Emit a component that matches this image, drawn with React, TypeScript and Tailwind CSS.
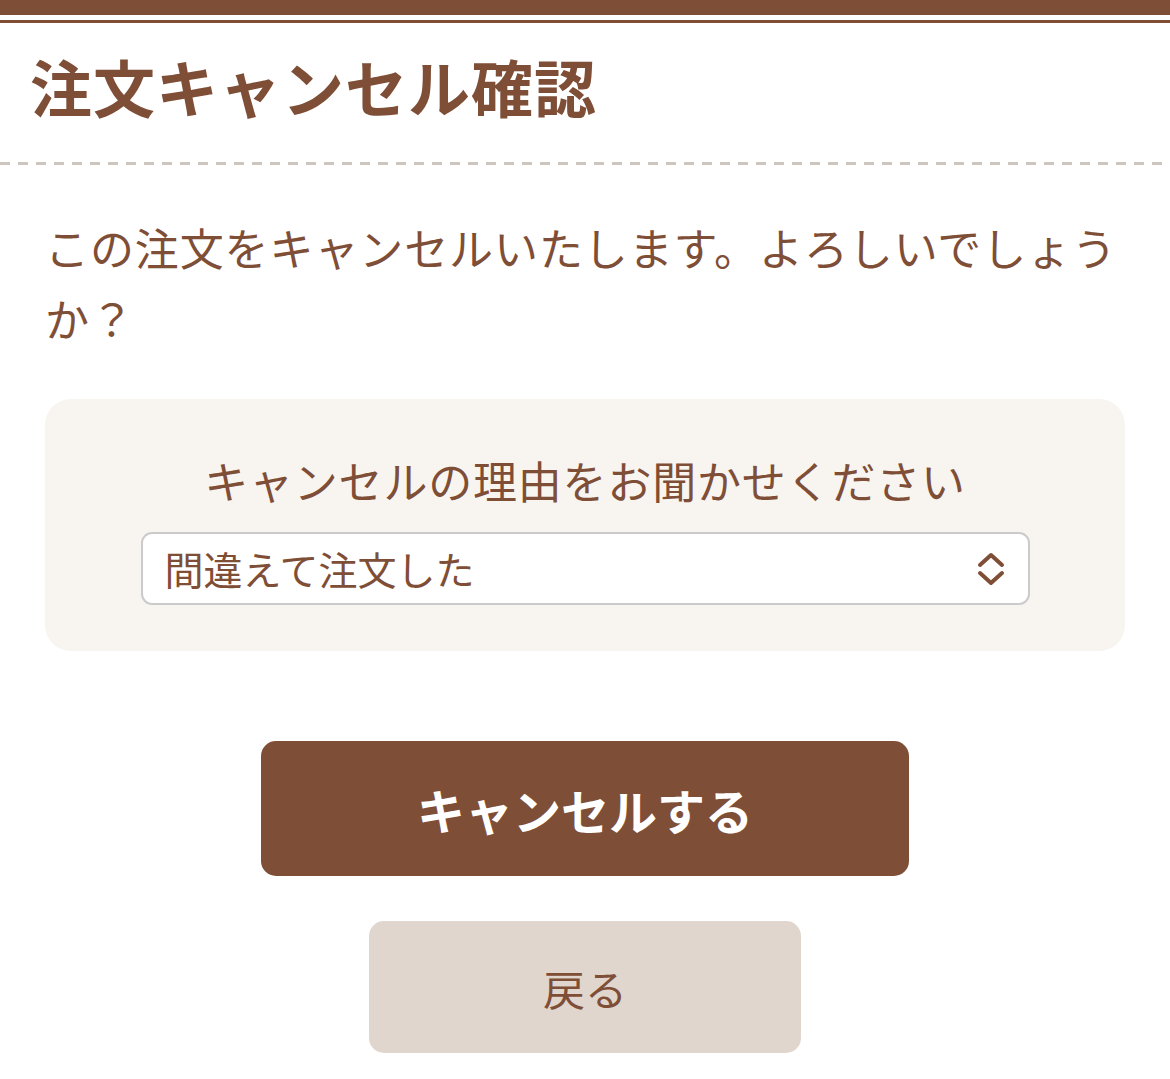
import React from "react";

const font = { fontFamily: '"Noto Sans CJK JP", "Noto Sans", sans-serif' };

function Chevrons() {
  return (
    <svg width="30" height="34" viewBox="0 0 30 34" fill="none" stroke="#7f4e37" strokeWidth="4" strokeLinecap="round" strokeLinejoin="round">
      <path d="M4 13 L15 3 L26 13" />
      <path d="M4 21 L15 31 L26 21" />
    </svg>
  );
}

export default function App() {
  return (
    <div className="min-h-[1079px] w-full bg-white text-[#7f4e37]" style={font}>
      <div className="h-[15px] bg-[#7f4e37]" />
      <div className="mt-[5px] h-[3px] bg-[#7f4e37]" />
      <h1 className="pl-[30px] pt-[17px] pb-[29px] text-[62px] font-bold leading-[93px] tracking-[1px]">注文キャンセル確認</h1>
      <div className="h-[3px] w-full bg-[repeating-linear-gradient(to_right,#ccc6be_0px,#ccc6be_10px,transparent_10px,transparent_18px)]" />
      <div className="px-[45px] pt-[47px]">
        <p className="text-[44px] leading-[71px] tracking-[0.9px]">この注文をキャンセルいたします。よろしいでしょうか？</p>
        <div className="mt-[45px] flex flex-col items-center rounded-[26px] bg-[#f8f5f1] pt-[48px] pb-[46px]">
          <p className="text-[44px] leading-[66px] tracking-[0.8px]">キャンセルの理由をお聞かせください</p>
          <div className="mt-[19px] flex h-[73px] w-[889px] items-center justify-between rounded-[11px] border-2 border-[#cbcbcb] bg-white pl-[22px] pr-[22px]">
            <span className="text-[39px] leading-none">間違えて注文した</span>
            <Chevrons />
          </div>
        </div>
        <div className="mt-[90px] flex flex-col items-center">
          <button className="flex h-[135px] w-[648px] items-center justify-center rounded-[15px] bg-[#7f4e37] text-[48px] font-bold text-white">
            キャンセルする
          </button>
          <button className="mt-[45px] flex h-[132px] w-[432px] items-center justify-center rounded-[15px] bg-[#e0d6cd] text-[42px] text-[#7f4e37]">
            戻る
          </button>
        </div>
      </div>
    </div>
  );
}
